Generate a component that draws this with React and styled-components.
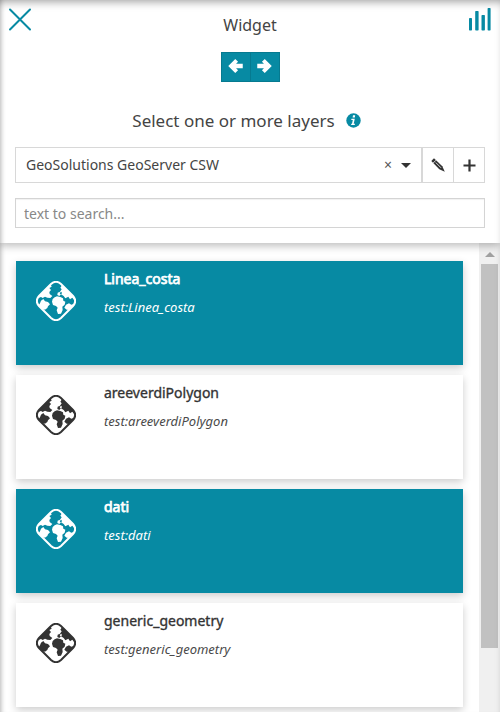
import React, { useId } from 'react';
import styled, { createGlobalStyle } from 'styled-components';

const TEAL = '#078aa3';

const GlobalStyle = createGlobalStyle`
  * { box-sizing: border-box; }
  body { margin: 0; background: #fff; overflow: hidden; font-family: "Noto Sans", sans-serif; color: #444; }
  button { font: inherit; padding: 0; cursor: pointer; }
`;

const Panel = styled.main`
  position: relative;
  display: flex;
  flex-direction: column;
  width: 500px;
  height: 712px;
  overflow: hidden;
  background: #fff;
  &::after {
    content: '';
    position: absolute;
    z-index: 2;
    inset: 0;
    pointer-events: none;
    box-shadow: inset 5px 0 5px -4px rgba(0, 0, 0, 0.22), inset 0 6px 8px -4px rgba(0, 0, 0, 0.36);
  }
`;

const Header = styled.header`
  position: relative;
  z-index: 1;
  flex: 0 0 243px;
  padding: 0 15px;
  background: #fff;
  box-shadow: 0 3px 8px rgba(0, 0, 0, 0.26);
`;

const TitleBar = styled.div`
  display: flex;
  justify-content: space-between;
  height: 52px;
  margin: 0 -6px 0 -7px;
  padding-top: 8px;
  svg { display: block; }
`;

const Title = styled.h1`
  margin: 5px 0 0 1px;
  font-size: 16px;
  line-height: 24px;
  font-weight: 400;
`;

const Steps = styled.div`
  display: flex;
  justify-content: center;
  height: 30px;
`;

const StepButton = styled.button`
  display: flex;
  align-items: center;
  justify-content: center;
  width: 30px;
  height: 30px;
  padding-bottom: 2px;
  border: 1px solid #067a90;
  background: ${TEAL};
  color: #fff;
  & + & { margin-left: -1px; }
`;

const Prompt = styled.div`
  display: flex;
  align-items: center;
  justify-content: center;
  gap: 11px;
  height: 24px;
  margin: 26px 0 15px;
  padding-right: 7px;
  font-size: 17px;
`;

const Catalog = styled.div`
  display: flex;
  height: 36px;
  border: 1px solid #d8d8d8;
`;

const Selected = styled.div`
  display: flex;
  flex: 1;
  align-items: center;
  padding: 0 10px;
  font-size: 14px;
`;

const CatalogName = styled.span`
  padding-bottom: 2px;
`;

const Clear = styled.span`
  margin-left: auto;
  margin-right: 9px;
  padding-bottom: 1px;
  color: #555;
  font-size: 14px;
`;

const ToolButton = styled.button`
  display: flex;
  align-items: center;
  justify-content: center;
  width: ${({ $width }) => $width}px;
  border: 0;
  border-left: ${({ $divider }) => $divider}px solid #d8d8d8;
  background: #fff;
  color: #333;
`;

const Search = styled.input`
  display: block;
  width: 100%;
  height: 30px;
  margin-top: 15px;
  padding: 0 8px;
  border: 1px solid #d4d4d4;
  border-radius: 0;
  box-shadow: inset 0 1px 1px rgba(0, 0, 0, 0.06);
  font: 14px "Noto Sans", sans-serif;
  outline: none;
  &::placeholder { color: #888; opacity: 1; }
`;

const Results = styled.section`
  display: flex;
  flex: 1;
  min-height: 0;
`;

const Cards = styled.div`
  flex: 1;
  display: flex;
  flex-direction: column;
  gap: 10px;
  padding: 18px 16px 0;
`;

const Card = styled.article`
  display: flex;
  flex: 0 0 104px;
  padding: 7px 20px;
  background: ${({ $selected }) => ($selected ? TEAL : '#fff')};
  color: ${({ $selected }) => ($selected ? '#fff' : '#333')};
  box-shadow: 0 3px 8px rgba(0, 0, 0, 0.2);
  svg { margin: 13px 28px 0 0; flex: none; }
`;

const LayerName = styled.h2`
  margin: 0;
  font-size: 14px;
  line-height: 22px;
  font-weight: 400;
  -webkit-text-stroke: ${({ $selected }) => ($selected ? 0.75 : 0.35)}px currentColor;
`;

const LayerId = styled.p`
  margin: 8px 0 0;
  color: ${({ $selected }) => ($selected ? '#fff' : '#4a4a4a')};
  font-size: 13px;
  line-height: 18px;
  font-style: italic;
`;

const Scrollbar = styled.div`
  display: flex;
  flex-direction: column;
  align-items: center;
  width: 21px;
  background: #f0f0f0;
`;

const ScrollArrow = styled.div`
  width: 0;
  margin-top: 9px;
  border: 5px solid transparent;
  border-top: 0;
  border-bottom-color: #a0a0a0;
`;

const Thumb = styled.div`
  width: 17px;
  height: 384px;
  margin-top: 7px;
  background: #c1c1c1;
`;

const diamond = 'M45 9Q60-4 75 9L111 45Q124 60 111 75L75 111Q60 124 45 111L9 75Q-4 60 9 45Z';

function GlobeIcon({ land, sea }) {
  const clip = useId();
  return (
    <svg width="40" height="40" viewBox="0 0 120 120">
      <clipPath id={clip}><path d={diamond} /></clipPath>
      <g clipPath={`url(#${clip})`}>
        <path fill={sea} d="M0 0H120V120H0Z" />
        <path fill={land} d="M60 0L42 6L47 17L40 21L45 27L40 33L41 39L49 45L43 51L34 50L27 47L20 51L15 48L7 51L0 45V0Z" />
        <path fill={land} d="M60 0L72 8L78 13L73 20L77 25L72 32L65 35L64 42L70 45L75 40L83 45L88 52L97 47L102 55L109 50L115 58L120 50V0Z" />
        <path fill={sea} d="M71 35L77 32L77 39L73 40Z" />
        <path fill={land} d="M50 54L56 49L63 46L73 48L81 52L82 59L88 62L86 71L79 77L80 87L75 98L66 99L62 88L65 80L60 75L51 72L48 62Z" />
        <path fill={land} d="M15 59L22 54L27 61L36 63L42 70L36 76L34 81L27 86L17 83L7 74L12 67Z" />
        <path fill={land} d="M90 71L99 67L106 71L120 67L110 82L101 87L92 86L85 80Z" />
      </g>
      <path d={diamond} fill="none" stroke={land} strokeWidth="6" />
    </svg>
  );
}

const layers = [
  { name: 'Linea_costa', selected: true },
  { name: 'areeverdiPolygon', selected: false },
  { name: 'dati', selected: true },
  { name: 'generic_geometry', selected: false },
];

const arrow = 'M0 7L7 0L9.8 2.8L7.8 4.8H14.5V9.2H7.8L9.8 11.2L7 14Z';

export default function App() {
  return (
    <>
      <GlobalStyle />
      <Panel>
        <Header>
          <TitleBar>
            <svg width="24" height="24" viewBox="0 0 24 24" stroke={TEAL} strokeWidth="2" strokeLinecap="round">
              <path d="M2 1.5L22 21.5M22 1.5L2 21.5" />
            </svg>
            <Title>Widget</Title>
            <svg width="24" height="24" viewBox="0 0 24 24" fill={TEAL}>
              <rect x="2" y="10" width="3" height="12.5" rx=".7" />
              <rect x="8.2" y="3" width="3.4" height="19.5" rx=".7" />
              <rect x="14.5" y="7" width="3.4" height="15.5" rx=".7" />
              <rect x="20.6" y="0" width="3" height="22.5" rx=".7" />
            </svg>
          </TitleBar>
          <Steps>
            <StepButton aria-label="Previous">
              <svg width="15" height="14" viewBox="0 0 14.5 14" fill="currentColor"><path d={arrow} /></svg>
            </StepButton>
            <StepButton aria-label="Next">
              <svg width="15" height="14" viewBox="0 0 14.5 14" fill="currentColor"><path d={arrow} transform="translate(14.5 0) scale(-1 1)" /></svg>
            </StepButton>
          </Steps>
          <Prompt>
            Select one or more layers
            <svg width="15" height="15" viewBox="0 0 15 15">
              <circle cx="7.5" cy="7.5" r="7.2" fill={TEAL} />
              <path fill="#fff" d="M7 2.3H9.2L8.8 4.4H6.6ZM5.5 5.7H8.8L7.7 10.8H9L8.7 12H5.1L5.3 10.8H6L6.8 6.9H5.2Z" />
            </svg>
          </Prompt>
          <Catalog>
            <Selected>
              <CatalogName>GeoSolutions GeoServer CSW</CatalogName>
              <Clear>×</Clear>
              <svg width="10" height="5" viewBox="0 0 10 5"><path fill="#333" d="M0 0H10L5 5Z" /></svg>
            </Selected>
            <ToolButton $width={32} $divider={2} aria-label="Edit">
              <svg width="14" height="14" viewBox="0 0 14 14">
                <path fill="#333" d="M.3 3L3 .3L11.3 8.3L13.8 13.8L8.3 11.3Z" />
                <path stroke="#fff" strokeWidth=".8" fill="none" d="M2.2 5L5 2.2M4.8 4.6L10 9.8" />
              </svg>
            </ToolButton>
            <ToolButton $width={31} $divider={1} aria-label="Add">
              <svg width="13" height="13" viewBox="0 0 13 13"><path d="M6.5 .5V12.5M.5 6.5H12.5" stroke="#333" strokeWidth="2.2" /></svg>
            </ToolButton>
          </Catalog>
          <Search placeholder="text to search..." />
        </Header>
        <Results>
          <Cards>
            {layers.map(({ name, selected }) => (
              <Card key={name} $selected={selected}>
                <GlobeIcon land={selected ? '#fff' : '#333'} sea={selected ? TEAL : '#fff'} />
                <div>
                  <LayerName $selected={selected}>{name}</LayerName>
                  <LayerId $selected={selected}>test:{name}</LayerId>
                </div>
              </Card>
            ))}
          </Cards>
          <Scrollbar>
            <ScrollArrow />
            <Thumb />
          </Scrollbar>
        </Results>
      </Panel>
    </>
  );
}
